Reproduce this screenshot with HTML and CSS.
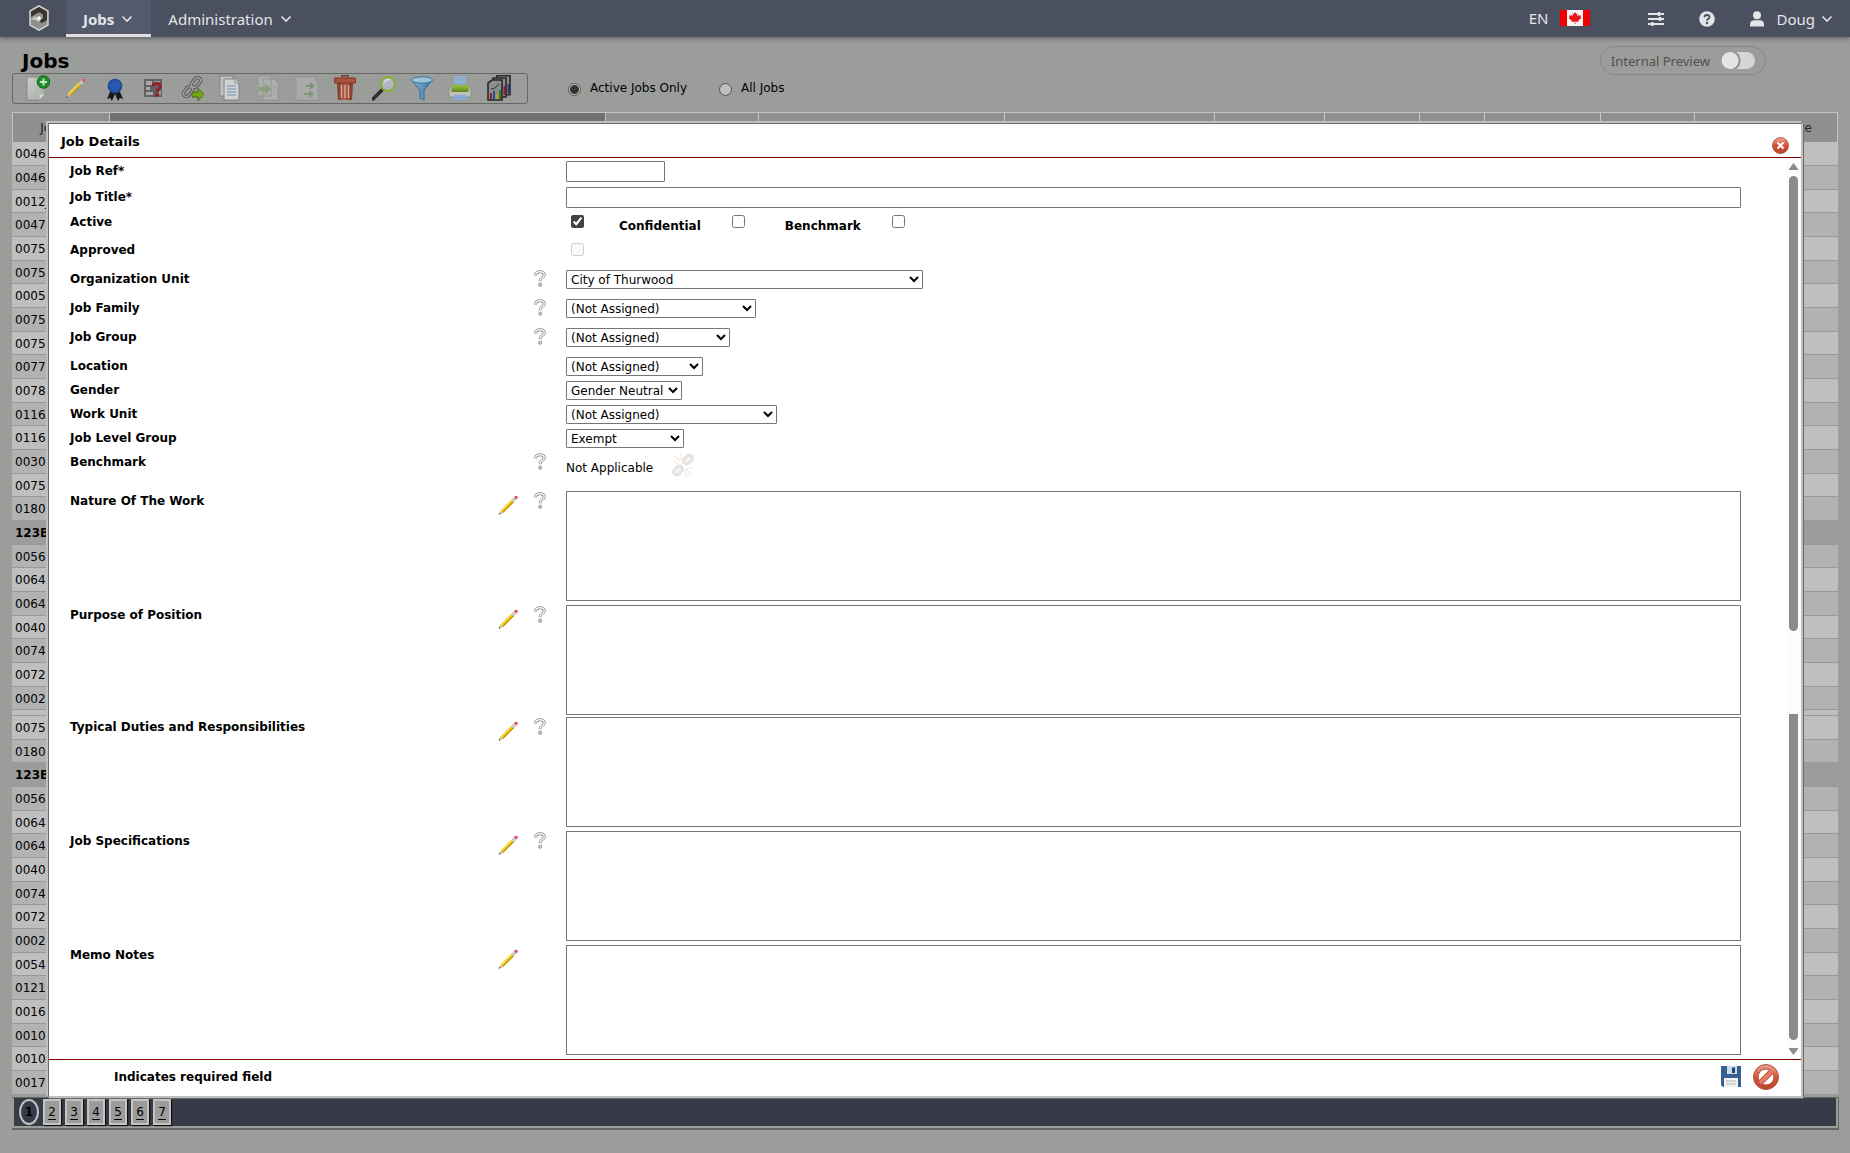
FILE: index.html
```html
<!DOCTYPE html>
<html lang="en">
<head>
    <meta charset="UTF-8">
    <meta name="viewport" content="width=device-width, initial-scale=1.0">
    <title>Jobs</title>
    <link rel="stylesheet" href="styles.css">
</head>
<body>

    <!-- Shared icons -->
    <svg class="sprite" aria-hidden="true">
        <defs>
            <linearGradient id="g-page" x1="0" y1="0" x2="1" y2="1"><stop offset="0" stop-color="#d2d4d2"/><stop offset="1" stop-color="#a9aba9"/></linearGradient>
            <linearGradient id="g-red" x1="0" y1="0" x2="0" y2="1"><stop offset="0" stop-color="#e9a595"/><stop offset="0.5" stop-color="#d4573c"/><stop offset="1" stop-color="#b8432b"/></linearGradient>
            <linearGradient id="g-bin" x1="0" y1="0" x2="1" y2="0"><stop offset="0" stop-color="#7d2f1d"/><stop offset="0.5" stop-color="#b4573f"/><stop offset="1" stop-color="#7d2f1d"/></linearGradient>
            <linearGradient id="g-blue" x1="0" y1="0" x2="1" y2="0"><stop offset="0" stop-color="#8fc0dc"/><stop offset="1" stop-color="#2a6da4"/></linearGradient>
            <linearGradient id="g-green" x1="0" y1="0" x2="0" y2="1"><stop offset="0" stop-color="#9cc33f"/><stop offset="1" stop-color="#558606"/></linearGradient>
            <symbol id="chevron" viewBox="0 0 12 8"><path d="M1.500 1.500 6 6l4.500-4.500" fill="none" stroke="currentColor" stroke-width="1.600"/></symbol>
            <symbol id="pencil" viewBox="0 0 20 20">
                <path d="M.2 19.800 2 15.500l2.500 2.500z" fill="#e3b79b"/><path d="M.2 19.800l.7-2 1.300 1.300z" fill="#444"/>
                <path d="M2 15.500 13 4.500 15.500 7 4.500 18z" fill="#eec61c"/><path d="M3.800 17.300 14.800 6.300l.7.7L4.500 18z" fill="#b98a10"/><path d="M2 15.500 13 4.500l.8.8L2.800 16.300z" fill="#f8e364"/>
                <path d="M13 4.500 15.500 2 18 4.500 15.500 7z" fill="#c9c9d2"/><path d="M15.500 2C17 .5 17.700.5 18.800 1.300s.7 1.700-.8 3.200z" fill="#e2525a"/>
            </symbol>
            <symbol id="help" viewBox="0 0 12 17">
                <path d="M1.700 5.500V4.800C1.700 2.600 3.500 1.700 6 1.700S10.300 2.800 10.300 4.800 8.800 7.300 7.500 8 6.200 9.500 6.200 11.200" fill="none" stroke="#8a8a8a" stroke-width="3"/>
                <path d="M1.700 5V4.800C1.700 2.600 3.500 1.700 6 1.700S10.300 2.800 10.300 4.800 8.800 7.300 7.500 8 6.200 9.500 6.200 10.700" fill="none" stroke="#f2f2f2" stroke-width="1.500"/>
                <circle cx="6.200" cy="14.700" r="1.500" fill="#ddd" stroke="#888"/>
            </symbol>
            <symbol id="link" viewBox="0 0 24 24">
                <rect x="13" y="2" width="6" height="11" rx="3" transform="rotate(40 16 7.500)" fill="none" stroke="#4c4c4c" stroke-width="3.400"/>
                <rect x="5" y="11" width="6" height="11" rx="3" transform="rotate(40 8 16.500)" fill="none" stroke="#4c4c4c" stroke-width="3.400"/>
                <rect x="13" y="2" width="6" height="11" rx="3" transform="rotate(40 16 7.500)" fill="none" stroke="#a6a6a6" stroke-width="1.400"/>
                <rect x="5" y="11" width="6" height="11" rx="3" transform="rotate(40 8 16.500)" fill="none" stroke="#a6a6a6" stroke-width="1.400"/>
            </symbol>
        </defs>
    </svg>

    <header class="navbar">
        <a class="logo" href="#" aria-label="Home">
            <svg width="20" height="26" viewBox="0 0 20 26"><path d="M10 .8 19 6v14l-9 5.200L1 20V6z" fill="#8f8f90" stroke="#d6d6d6" stroke-width="1.400"/><path d="M10 2 18 6.600V15l-5 3-3.500-2 4.500-3V9.500L10 7.200 5.500 9.800 2 12V6.600z" fill="#3a352b"/><path d="M2 14l4-3 4 3 3.500-1L10 17l-3-1.500z" fill="#c2c2c2"/><circle cx="10" cy="13" r="1.800" fill="#fff"/></svg>
        </a>
        <nav class="menu">
            <a class="menu-item active" href="#">Jobs <svg class="chevron"><use href="#chevron"/></svg></a>
            <a class="menu-item" href="#">Administration <svg class="chevron"><use href="#chevron"/></svg></a>
        </nav>
        <div class="nav-right">
            <a class="lang" href="#">EN
                <svg width="30" height="16" viewBox="0 0 30 16"><path fill="#f6f6f6" d="M0 0h30v16H0z"/><path fill="#f00000" d="M0 0h7v16H0zM23 0h7v16h-7z"/><path fill="#e8151b" d="M15 1.800l1.200 2.200 1.300-.6-.5 3 1.900-1.700.4 1.100 1.900-.3-.8 1.800 1 .6-3.300 2.900.3 1.300-3.100-.5.100 2.600h-.8l.1-2.600-3.100.5.300-1.300-3.300-2.900 1-.6-.8-1.800 1.900.3.400-1.100 1.900 1.700-.5-3 1.300.6z"/></svg>
            </a>
            <a class="nav-icon" href="#" aria-label="Settings">
                <svg width="16" height="16" viewBox="0 0 16 16" stroke="#e4e4e6" stroke-width="2"><path d="M0 3h16M0 8h16M0 13h16"/><path d="M11 1v4M12 6v4M4.500 11v4" stroke-width="2.500"/></svg>
            </a>
            <a class="nav-icon" href="#" aria-label="Help">
                <svg width="16" height="16" viewBox="0 0 16 16"><circle cx="8" cy="8" r="7.800" fill="#e4e4e6"/><path d="M5.500 6.200C5.600 4.700 6.600 4 8 4s2.500.8 2.500 2.200C10.500 7.800 8 7.700 8 9.800" fill="none" stroke="#4a5060" stroke-width="1.800"/><circle cx="8" cy="12" r="1.200" fill="#4a5060"/></svg>
            </a>
            <a class="user" href="#">
                <svg width="14" height="16" viewBox="0 0 14 16" fill="#e4e4e6"><circle cx="7" cy="4.300" r="4"/><path d="M0 15.500v-2C0 10.500 2 9.300 4 9.300h6c2 0 4 1.200 4 4.200v2z"/></svg>
                <span>Doug</span>
                <svg class="chevron"><use href="#chevron"/></svg>
            </a>
        </div>
    </header>

    <main class="page">
        <div class="page-head">
            <h1>Jobs</h1>
            <label class="preview">Internal Preview <input type="checkbox" class="switch"></label>
        </div>

        <div class="tools">
            <div class="toolbar">
                <button class="tool" type="button" aria-label="New">
                    <svg viewBox="0 0 24 26"><path d="M1 2h18v17l-6 6H1z" fill="url(#g-page)" stroke="#868886"/><path d="M19 19l-6 6c1-2 1-4 0-6 2 1 4 1 6 0z" fill="#e0e0e0"/><circle cx="17.500" cy="7" r="6.300" fill="#118a1a" stroke="#0a5f11"/><path d="M17.500 3.500v7M14 7h7" stroke="#d5ead5" stroke-width="2"/></svg>
                </button>
                <button class="tool tool-pencil" type="button" aria-label="Edit"><svg><use href="#pencil"/></svg></button>
                <button class="tool" type="button" aria-label="Award">
                    <svg viewBox="0 0 24 26"><path d="M8 14 4 24l3-1 2 3 3-7 3 7 2-3 3 1-4-10z" fill="#0b0e17"/><circle cx="12" cy="11" r="7.300" fill="#173f94"/><circle cx="12" cy="11" r="5.500" fill="#1d52b5"/></svg>
                </button>
                <button class="tool" type="button" aria-label="Questionnaire">
                    <svg viewBox="0 0 24 26"><path d="M3 4h18v18H3z" fill="#5c5c5c"/><path d="M5 6h6v4H5zM5 12h4v3H5zM5 17h7v3H5z" fill="#aaa"/><path d="M13 6h6v2h-6zM18 16h2v4h-2z" fill="#999"/><path d="M12 11.500c0-2 1.500-3.200 3.500-3.200s4 .7 4 3-3.500 2.700-3.500 5.700" fill="none" stroke="#95121a" stroke-width="2.800"/><circle cx="16" cy="20" r="1.900" fill="#95121a"/></svg>
                </button>
                <button class="tool" type="button" aria-label="Link">
                    <svg viewBox="0 0 24 26"><use href="#link" width="24" height="24"/><path d="M12 17h6v-3.500l6 6-6 6V22h-6z" fill="#70a50a" stroke="#3f6404"/></svg>
                </button>
                <button class="tool" type="button" aria-label="Copy">
                    <svg viewBox="0 0 24 26"><path d="M2 1h13v20H2z" fill="#c6c8c6" stroke="#808280"/><path d="M6 4h11l4 4v17H6z" fill="#d6d8d7" stroke="#808280"/><path d="M9 11h9M9 14h9M9 17h9M9 20h9" stroke="#6f8fb5"/><path d="M17 4v4h4" fill="#e4e4e4" stroke="#858785"/></svg>
                </button>
                <button class="tool faded" type="button" aria-label="Import">
                    <svg viewBox="0 0 24 26"><path d="M2 1h13v20H2zM7 4h11l4 4v17H7z" fill="#c8cac8" stroke="#8a8c8a"/><path d="M17 12h3M17 15h3M17 18h3" stroke="#999"/><path d="M3 12h6V8l7 6-7 6v-4H3z" fill="#6fa04f"/></svg>
                </button>
                <button class="tool faded" type="button" aria-label="Move">
                    <svg viewBox="0 0 24 26"><path d="M1 2h17l5 5v18H1z" fill="#c0c2c0" stroke="#8a8c8a"/><path d="M11 10h4V7l5 4-5 4v-3h-4z" fill="#4d8f45"/><path d="M9 18h5v-3l5 4-5 4v-3H9z" fill="#4d8f45"/></svg>
                </button>
                <button class="tool" type="button" aria-label="Delete">
                    <svg viewBox="0 0 24 26"><path d="M4 8h16l-1 17H5z" fill="url(#g-bin)"/><path d="M8.500 10v13M12 10v13M15.500 10v13" stroke="#d9b3a8" stroke-width="1.300"/><path d="M1.500 3h21v5h-21z" fill="#ad4b32" stroke="#7a2c1a"/><path d="M9 2.500V.8h6v1.700" fill="none" stroke="#7a2c1a" stroke-width="1.500"/></svg>
                </button>
                <button class="tool" type="button" aria-label="Search">
                    <svg viewBox="0 0 24 26"><path d="M1 24 10 15" stroke="#222" stroke-width="3.500" stroke-linecap="round"/><circle cx="16" cy="9" r="7" fill="#b9b6cb" stroke="#84b32b" stroke-width="2.200"/><path d="M12 8c1-3 4-4 6-3" stroke="#e2e0ea" stroke-width="1.500" fill="none"/></svg>
                </button>
                <button class="tool" type="button" aria-label="Filter">
                    <svg viewBox="0 0 24 26"><path d="M1.500 5 10 15v8l4 2V15l8.500-10z" fill="url(#g-blue)" stroke="#2a6496"/><ellipse cx="12" cy="5" rx="10.500" ry="3.200" fill="#9cc7de" stroke="#2f72a8"/></svg>
                </button>
                <button class="tool" type="button" aria-label="Print">
                    <svg viewBox="0 0 24 26"><path d="M6 1h12v10H6z" fill="#8db2d6"/><path d="M3 10h18l2 6v6H1v-6z" fill="#c3c6be" stroke="#8d8f8a"/><path d="M3.500 10h17v7h-17z" fill="url(#g-green)"/><path d="M6 20h12l1 5H5z" fill="#86adda"/></svg>
                </button>
                <button class="tool" type="button" aria-label="Reports">
                    <svg viewBox="0 0 24 26"><g stroke="#1c1c1c" stroke-width="1.600" fill="#8c8c8c"><path d="M10 .8h13v19H10z"/><path d="M6 3h13v19H6z"/><path d="M1 8l4-3h10v20H1z"/></g><path d="M4 14c4 0 5-2 8-5" stroke="#222" fill="none"/><path d="M4 24v-6" stroke="#8e1515" stroke-width="2"/><path d="M7 24v-8" stroke="#26419c" stroke-width="2"/><path d="M10 24v-5" stroke="#b5a51b" stroke-width="2"/><path d="M13 24v-9" stroke="#2c7d2c" stroke-width="2"/><path d="M17.500 20v-9" stroke="#8e1515" stroke-width="2"/><path d="M21.500 18V9" stroke="#1d2890" stroke-width="2"/></svg>
                </button>
            </div>
            <label class="radio"><input type="radio" name="scope" checked> Active Jobs Only</label>
            <label class="radio"><input type="radio" name="scope"> All Jobs</label>
        </div>

        <table class="jobs">
            <colgroup>
                <col class="c-ref"><col class="c-title"><col class="c-153"><col class="c-246"><col class="c-210"><col class="c-110"><col class="c-95"><col class="c-65"><col class="c-116"><col class="c-94"><col>
            </colgroup>
            <thead>
                <tr><th>Job Ref</th><th class="sorted"></th><th></th><th></th><th></th><th></th><th></th><th></th><th></th><th></th><th class="date">Date</th></tr>
            </thead>
            <tbody id="jobs-body"></tbody>
        </table>

        <nav class="pager" aria-label="Pages">
            <span class="current">1</span>
            <a href="#">2</a><a href="#">3</a><a href="#">4</a><a href="#">5</a><a href="#">6</a><a href="#">7</a>
        </nav>
    </main>

    <form class="modal">
        <div class="modal-head">
            <h2>Job Details</h2>
            <button class="icon-btn" type="button" aria-label="Close">
                <svg width="17" height="17" viewBox="0 0 17 17"><circle cx="8.500" cy="8.500" r="8" fill="url(#g-red)" stroke="#a5452f" stroke-width=".8"/><path d="M5.500 5.500l6 6M11.500 5.500l-6 6" stroke="#fff" stroke-width="2"/></svg>
            </button>
        </div>

        <div class="modal-body">
            <div class="fields">
                <div class="row row-input"><label for="ref">Job Ref*</label><input class="text short" id="ref" type="text"></div>
                <div class="row row-input"><label for="title">Job Title*</label><input class="text" id="title" type="text"></div>
                <div class="row row-check">
                    <label for="active">Active</label>
                    <div class="checks">
                        <input id="active" type="checkbox" checked>
                        <label for="confidential">Confidential</label><input id="confidential" type="checkbox">
                        <label for="is-benchmark">Benchmark</label><input id="is-benchmark" type="checkbox">
                    </div>
                </div>
                <div class="row row-check"><label for="approved">Approved</label><div class="checks"><input id="approved" type="checkbox" disabled></div></div>
                <div class="row row-help"><label for="org">Organization Unit</label><svg class="help"><use href="#help"/></svg><select class="w-org" id="org"><option>City of Thurwood</option></select></div>
                <div class="row row-help"><label for="family">Job Family</label><svg class="help"><use href="#help"/></svg><select class="w-family" id="family"><option>(Not Assigned)</option></select></div>
                <div class="row row-help"><label for="group">Job Group</label><svg class="help"><use href="#help"/></svg><select class="w-group" id="group"><option>(Not Assigned)</option></select></div>
                <div class="row"><label for="location">Location</label><select class="w-location" id="location"><option>(Not Assigned)</option></select></div>
                <div class="row"><label for="gender">Gender</label><select class="w-gender" id="gender"><option>Gender Neutral</option></select></div>
                <div class="row"><label for="unit">Work Unit</label><select class="w-unit" id="unit"><option>(Not Assigned)</option></select></div>
                <div class="row"><label for="level">Job Level Group</label><select class="w-level" id="level"><option>Exempt</option></select></div>
                <div class="row row-benchmark">
                    <span class="name">Benchmark</span><svg class="help"><use href="#help"/></svg>
                    <div class="value"><span>Not Applicable</span>
                        <svg class="unlink" width="24" height="24" viewBox="0 0 24 24"><g stroke="#f09a30" stroke-width="1.300"><path d="M4 3l5 5M9 0l2 7M2 8l5 2M20 21l-5-5M15 24l-1-7M22 16l-5-2"/></g><rect x="14" y="1.500" width="6" height="10" rx="3" transform="rotate(45 17 6.500)" fill="#ccc" stroke="#777" stroke-width="3"/><rect x="4" y="12.500" width="6" height="10" rx="3" transform="rotate(45 7 17.500)" fill="#ccc" stroke="#777" stroke-width="3"/></svg>
                    </div>
                </div>
                <div class="row row-text"><label for="nature">Nature Of The Work</label><svg class="pencil"><use href="#pencil"/></svg><svg class="help"><use href="#help"/></svg><textarea id="nature"></textarea></div>
                <div class="row row-text tight"><label for="purpose">Purpose of Position</label><svg class="pencil"><use href="#pencil"/></svg><svg class="help"><use href="#help"/></svg><textarea id="purpose"></textarea></div>
                <div class="row row-text"><label for="duties">Typical Duties and Responsibilities</label><svg class="pencil"><use href="#pencil"/></svg><svg class="help"><use href="#help"/></svg><textarea id="duties"></textarea></div>
                <div class="row row-text"><label for="specs">Job Specifications</label><svg class="pencil"><use href="#pencil"/></svg><svg class="help"><use href="#help"/></svg><textarea id="specs"></textarea></div>
                <div class="row row-text"><label for="memo">Memo Notes</label><svg class="pencil"><use href="#pencil"/></svg><textarea id="memo"></textarea></div>
            </div>
            <div class="scroll" aria-hidden="true">
                <svg width="9" height="7" viewBox="0 0 9 7"><path d="M4.500 0 9 6v1H0V6z" fill="#8b8b8b"/></svg>
                <span class="thumb thumb-top"></span>
                <span class="thumb thumb-bottom"></span>
                <svg width="9" height="7" viewBox="0 0 9 7"><path d="M4.500 7 9 1V0H0v1z" fill="#8b8b8b"/></svg>
            </div>
        </div>

        <div class="modal-foot">
            <strong>Indicates required field</strong>
            <button class="icon-btn" type="button" aria-label="Save">
                <svg width="20" height="21" viewBox="0 0 20 21"><path d="M0 0h20v21H2l-2-2z" fill="#35608f"/><path d="M6 0h10v8H6z" fill="#cfdae8"/><path d="M11 1.500h3v5.500h-3z" fill="#24477a"/><path d="M3 12h14v9H3z" fill="#f2f2f2"/><path d="M5 15h10M5 18h10" stroke="#b5b5b5"/></svg>
            </button>
            <button class="icon-btn" type="button" aria-label="Cancel">
                <svg width="26" height="26" viewBox="0 0 26 26"><circle cx="13" cy="13" r="12.500" fill="url(#g-red)" stroke="#b0523d"/><circle cx="13" cy="13" r="8" fill="#fff" stroke="#c04a32"/><path d="M7.500 18.500l11-11" stroke="#c04a32" stroke-width="5.500"/><path d="M7 19l12-12" stroke="#e08068" stroke-width="3.500"/></svg>
            </button>
        </div>
    </form>

    <script src="script.js"></script>
</body>
</html>
```
FILE: styles.css
```css
* {
    box-sizing: border-box;
}

body {
    margin: 0;
    min-height: 100vh;
    position: relative;
    background: #9b9d9b;
    color: #000;
    font-family: Verdana, "DejaVu Sans", sans-serif;
    font-size: 12px;
}

button {
    padding: 0;
    border: 0;
    background: none;
    cursor: pointer;
}

a {
    color: inherit;
    text-decoration: none;
}

.sprite {
    position: absolute;
    width: 0;
    height: 0;
}

/* Navigation */
.navbar {
    display: flex;
    height: 37px;
    background: #4a5060;
    color: #e4e4e6;
    font-family: "Noto Sans", sans-serif;
    font-size: 15px;
    box-shadow: 0 1px 5px #555;
}

.logo {
    display: flex;
    align-items: center;
    justify-content: center;
    width: 66px;
    padding: 0 0 2px 11px;
}

.menu {
    display: flex;
}

.menu-item {
    display: flex;
    align-items: center;
    gap: 7px;
    padding: 1px 18px 0 17px;
}

.menu-item.active {
    padding-top: 4px;
    border-bottom: 3px solid #e0dee0;
    background: #535a6c;
    font-weight: bold;
}

.chevron {
    width: 12px;
    height: 8px;
}

.nav-right {
    display: flex;
    align-items: center;
    margin-left: auto;
    padding: 1px 17px 0 0;
}

.lang {
    display: flex;
    align-items: center;
    gap: 12px;
    margin-right: 58px;
    padding-bottom: 3px;
}

.nav-icon {
    display: flex;
    margin-right: 35px;
}

.user {
    display: flex;
    align-items: center;
    gap: 6px;
}

.user span {
    margin-left: 6px;
}

/* Page header and tools */
.page-head {
    display: flex;
    justify-content: space-between;
    height: 36px;
    padding: 9px 84px 0 22px;
}

h1 {
    margin: 3px 0 0;
    font-size: 20px;
    line-height: 24px;
}

.preview {
    display: flex;
    align-items: center;
    gap: 11px;
    height: 29px;
    padding: 0 10px;
    border: 1px solid #858785;
    border-radius: 15px;
    color: #4f514f;
    font-family: "Noto Sans", sans-serif;
    font-size: 13px;
}

.switch {
    appearance: none;
    width: 34px;
    height: 17px;
    margin: 0;
    border-radius: 9px;
    background: radial-gradient(circle at 9px 50%, #e4e4e4 8px, #8f918f 9px, #8f918f 10px, #d5d5d5 11px);
}

.tools {
    display: flex;
    align-items: center;
    height: 31px;
    margin-left: 12px;
}

.toolbar {
    display: flex;
    align-items: center;
    justify-content: space-between;
    width: 516px;
    height: 31px;
    padding: 0 16px 1px 13px;
    border: 1px solid #666;
    border-radius: 3px;
}

.tool {
    display: flex;
    width: 24px;
    height: 26px;
    align-items: center;
    justify-content: center;
    opacity: 0.9;
}

.tool svg {
    width: 24px;
    height: 26px;
}

.tool-pencil svg {
    width: 20px;
    height: 20px;
}

.tool.faded {
    opacity: 0.4;
}

.radio {
    display: flex;
    align-items: center;
    gap: 9px;
    margin-left: 32px;
    padding-bottom: 2px;
}

.radio:first-of-type {
    margin-left: 40px;
}

.radio input {
    appearance: none;
    width: 13px;
    height: 13px;
    margin: 3px 0 0;
    border: 1px solid #555;
    border-radius: 50%;
    background: #bfbfbf;
}

.radio input:checked {
    background: radial-gradient(circle, #333 4px, #bfbfbf 5px);
}

/* Jobs grid */
.jobs {
    table-layout: fixed;
    width: calc(100% - 24px);
    margin: 8px 12px 0;
    border-collapse: separate;
    border-spacing: 0;
}

.c-ref { width: 98px; }
.c-title { width: 496px; }
.c-153 { width: 153px; }
.c-246 { width: 246px; }
.c-210 { width: 210px; }
.c-110 { width: 110px; }
.c-95 { width: 95px; }
.c-65 { width: 65px; }
.c-116 { width: 116px; }
.c-94 { width: 94px; }

.jobs th {
    height: 30px;
    padding: 0;
    border-top: 1px solid #c4c4c4;
    border-right: 1px solid #c4c4c4;
    background: #8f8f8f;
    color: #222;
    font-size: 12px;
    font-weight: normal;
}

.jobs th:first-child {
    border-left: 1px solid #c4c4c4;
}

.jobs th.sorted {
    background: #707170;
}

.jobs th.date {
    padding-right: 25px;
    text-align: right;
}

.jobs tbody tr {
    height: 24px;
    background: #bfbfbf;
}

.jobs tbody tr:nth-child(3n) {
    height: 23px;
}

.jobs tbody tr.even {
    background: #b2b2b2;
}

.jobs tbody tr.selected {
    background: #9c9c9c;
    font-weight: bold;
}

.jobs tbody tr.gap {
    height: 6px;
}

.jobs td {
    padding: 1px 0 0 3px;
    border-bottom: 1px solid #999;
    line-height: 14px;
}

/* Pager */
.pager {
    display: flex;
    gap: 4px;
    height: 33px;
    margin: 2px 11px 0 12px;
    padding: 1px 7px 2px;
    border: solid #666;
    border-width: 1px 1px 2px 0;
    background: #373b48;
    box-shadow: inset 2px 0 #9b9d9b, inset -2px -2px #9b9d9b;
}

.pager a,
.pager .current {
    width: 18px;
    height: 26px;
    border: 2px solid #c4c4c4;
    background: #9c9c9c;
    line-height: 22px;
    text-align: center;
}

.pager a {
    text-decoration: underline;
    text-underline-offset: 3px;
    box-shadow: 1px 1px 1px #111;
}

.pager .current {
    width: 20px;
    border-radius: 50%;
    background: none;
    font-weight: bold;
}

/* Job details window */
.modal {
    position: absolute;
    top: 123px;
    left: 48px;
    right: 47px;
    background: #fff;
    border: solid #6b6b6b;
    border-width: 1px 2px 2px 1px;
    border-right-color: #bfbfbf;
    border-bottom-color: #bfbfbf;
    box-shadow: -2px -2px #bfbfbf, 1px 1px #6b6b6b;
}

.modal-head {
    display: flex;
    align-items: center;
    justify-content: space-between;
    height: 34px;
    padding: 1px 12px 0;
    border-bottom: 1px solid #800000;
}

h2 {
    margin: 0;
    font-size: 13px;
}

.icon-btn {
    display: flex;
}

.modal-head .icon-btn {
    margin-top: 8px;
}

.modal-body {
    display: flex;
}

.fields {
    flex: 1;
    padding: 3px 45px 0 21px;
}

.row {
    display: grid;
    grid-template-columns: 428px 21px 15px 32px 1fr;
    align-items: start;
    height: 24px;
}

.row > label,
.name {
    grid-column: 1;
    padding-top: 3px;
    font-weight: bold;
    line-height: 14px;
}

.row > .pencil {
    grid-column: 2;
    width: 21px;
    height: 20px;
    margin-top: 4px;
}

.row > .help {
    grid-column: 4;
    width: 12px;
    height: 17px;
    margin-top: 1px;
}

.row > input,
.row > select,
.row > textarea,
.checks,
.value {
    grid-column: 5;
}

.row-input { height: 26px; }
.row-check { height: 28px; }
.row-help { height: 29px; }
.row-benchmark { height: 39px; }
.row-text { height: 114px; }
.row-text.tight { height: 112px; }

.row-check > label {
    padding-top: 2px;
}

.text {
    width: 100%;
    height: 21px;
    border: 1px solid #767676;
    border-radius: 1px;
}

.text.short {
    width: 99px;
}

select {
    height: 19px;
    margin: 1px 0 0;
    padding: 0;
    border: 1px solid #767676;
    border-radius: 1px;
    background: #fff;
    color: #000;
    font-family: inherit;
    font-size: 12px;
}

.w-org { width: 357px; }
.w-family { width: 190px; }
.w-group { width: 164px; }
.w-location { width: 137px; }
.w-gender { width: 116px; }
.w-unit { width: 211px; }
.w-level { width: 118px; }

.checks {
    display: flex;
    align-items: flex-start;
    padding-top: 2px;
}

.checks input {
    width: 13px;
    height: 13px;
    margin: 0 30px 0 5px;
    accent-color: #444;
}

.checks label {
    margin: 0 26px 0 5px;
    padding-top: 4px;
    font-weight: bold;
}

.checks label ~ label {
    margin-left: 10px;
}

.value {
    display: flex;
    align-items: center;
    gap: 18px;
    padding-top: 1px;
}

.value span {
    padding-top: 6px;
}

.unlink {
    opacity: 0.2;
}

textarea {
    width: 100%;
    height: 110px;
    border: 1px solid #767676;
    resize: none;
}

.scroll {
    display: flex;
    flex-direction: column;
    align-items: center;
    width: 15px;
    padding: 5px 0 4px;
    background: #fcfcfc;
}

.thumb {
    width: 9px;
    background: #8b8b8b;
}

.thumb-top {
    flex: 455;
    margin: 6px 0 83px;
    border-radius: 5px;
}

.thumb-bottom {
    flex: 326;
    margin-bottom: 8px;
    border-radius: 0 0 5px 5px;
}

.modal-foot {
    display: flex;
    align-items: center;
    gap: 12px;
    height: 37px;
    padding: 0 22px 3px 65px;
    border-top: 1px solid #800000;
}

.modal-foot strong {
    flex: 1;
}
```
FILE: script.js
```js
// Job reference numbers of the current page
const refs = ["0046", "0046A", "0012J", "0047", "00750", "0075", "00050", "00750", "0075", "0077", "0078", "0116A",
    "0116", "0030", "0075", "0180", "123B", "0056", "0064", "0064A", "0040", "0074", "0072", "0002", "",
    "0075", "0180", "123B", "0056", "0064", "0064A", "0040", "0074", "0072", "0002", "0054", "0121", "0016",
    "0010", "0010A", "0017"];

const body = document.getElementById("jobs-body");
refs.forEach((ref, i) => {
    const row = body.insertRow();
    if (i < 25 ? i % 2 === 1 : i % 2 === 0) row.classList.add("even");
    if (ref === "123B") row.classList.add("selected");
    if (ref === "") row.classList.add("gap");
    row.insertCell().textContent = ref;
    row.insertCell().colSpan = 10;
});
```
